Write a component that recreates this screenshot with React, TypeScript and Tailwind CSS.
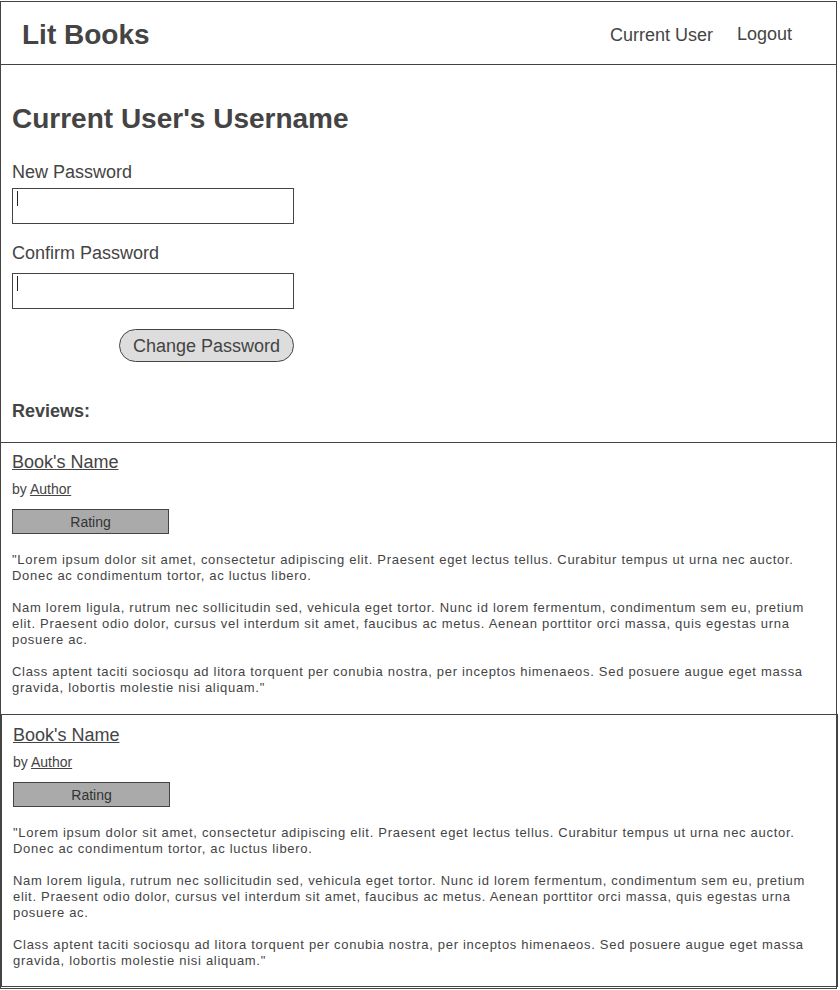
import React from 'react';

interface Review {
  book: string;
  author: string;
  paragraphs: string[];
}

const reviewText: string[] = [
  '"Lorem ipsum dolor sit amet, consectetur adipiscing elit. Praesent eget lectus tellus. Curabitur tempus ut urna nec auctor. Donec ac condimentum tortor, ac luctus libero.',
  'Nam lorem ligula, rutrum nec sollicitudin sed, vehicula eget tortor. Nunc id lorem fermentum, condimentum sem eu, pretium elit. Praesent odio dolor, cursus vel interdum sit amet, faucibus ac metus. Aenean porttitor orci massa, quis egestas urna posuere ac.',
  'Class aptent taciti sociosqu ad litora torquent per conubia nostra, per inceptos himenaeos. Sed posuere augue eget massa gravida, lobortis molestie nisi aliquam."',
];

const reviews: Review[] = [
  { book: "Book's Name", author: 'Author', paragraphs: reviewText },
  { book: "Book's Name", author: 'Author', paragraphs: reviewText },
];

const ReviewBody: React.FC<{ review: Review }> = ({ review }) => (
  <>
    <a href="#" className="block text-[18px] leading-[20px] underline">
      {review.book}
    </a>
    <p className="mt-[9px] text-[14px] leading-[16px]">
      by{' '}
      <a href="#" className="underline">
        {review.author}
      </a>
    </p>
    <div className="mt-[12px] flex h-[25px] w-[157px] items-center justify-center border border-[#444] bg-[#aaa] text-[14px] leading-[16px] text-[#333]">
      Rating
    </div>
    <div className="mt-[18px] flex flex-col gap-4 text-[13px] leading-[16px] tracking-[0.7px]">
      {review.paragraphs.map((p, i) => (
        <p key={i}>{p}</p>
      ))}
    </div>
  </>
);

const PasswordField: React.FC<{ label: string; labelGap: string; top: string }> = ({ label, labelGap, top }) => (
  <div className={top}>
    <label className="block text-[18px] leading-[20px]">{label}</label>
    <div className={`${labelGap} h-[36px] w-[282px] border border-[#444] pl-1 pt-[2px]`}>
      <span className="block h-[15px] w-px bg-[#222]" />
    </div>
  </div>
);

const App: React.FC = () => {
  return (
    <div className="bg-white pt-px text-[#444]" style={{ fontFamily: '"Liberation Sans", Arial, sans-serif' }}>
      <div className="w-[837px] border-x border-t border-b border-[#444] pb-px">
        <header className="flex h-[63px] items-center justify-between border-b border-[#444] pl-[21px] pr-[44px] pt-[3px]">
          <h1 className="text-[28px] font-bold leading-[32px]">Lit Books</h1>
          <nav className="flex items-center gap-6 text-[18px] leading-[20px]">
            <a href="#">Current User</a>
            <a href="#" className="mb-[2px]">Logout</a>
          </nav>
        </header>

        <section className="px-[11px] pt-[38px] pb-[21px]">
          <h2 className="text-[28px] font-bold leading-[32px]">Current User's Username</h2>
          <div className="w-[282px]">
            <PasswordField label="New Password" labelGap="mt-[6px]" top="mt-[27px]" />
            <PasswordField label="Confirm Password" labelGap="mt-[10px]" top="mt-[19px]" />
            <div className="mt-[20px] flex justify-end">
              <button className="h-[33px] w-[175px] rounded-full border border-[#444] bg-[#ddd] text-[18px] leading-[20px]">
                Change Password
              </button>
            </div>
          </div>
          <h3 className="mt-[39px] text-[18px] font-bold leading-[20px]">Reviews:</h3>
        </section>

        <article className="border-t border-[#444] px-[11px] pt-[9px] pb-[18px]">
          <ReviewBody review={reviews[0]} />
        </article>
        <article className="w-[837px] border border-[#444] px-[11px] pt-[10px] pb-[17px]">
          <ReviewBody review={reviews[1]} />
        </article>
      </div>
    </div>
  );
};

export default App;
